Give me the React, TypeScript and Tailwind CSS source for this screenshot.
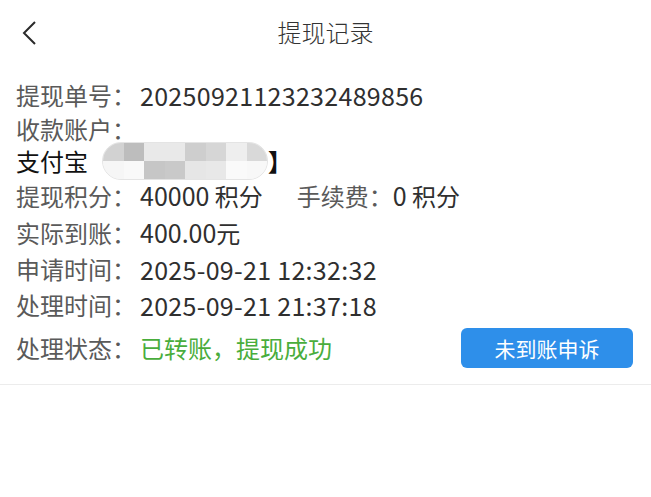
import { ReactNode } from 'react';

const font = { fontFamily: '"Noto Sans CJK SC", "Noto Sans", sans-serif' };

function Row({ label, children, className = '' }: { label: string; children: ReactNode; className?: string }) {
  return (
    <div className={`flex items-center ${className}`}>
      <span className="w-[124px] shrink-0 text-[#5a5a5a]">{label}</span>
      <span className="text-[#2f2f2f]">{children}</span>
    </div>
  );
}

// pixelated blur over the account name
const top = ['#d2d2d2', '#bdbdbd', '#e9e9e9', '#e9e9e9', '#cecece', '#d6d6d6', '#eeeeee', '#d9d9d9'];
const bottom = ['#f6f6f6', '#f9f9f9', '#c6c6c6', '#c9c9c9', '#e6e6e6', '#e8e8e8', '#fafafa', '#f8f8f8'];

function Mosaic() {
  return (
    <div className="ml-[14px] flex h-[38px] w-[166px] flex-col overflow-hidden rounded-full border border-[#e4e4e4] bg-[#f6f6f6]">
      <div className="flex h-1/2">
        {top.map((c, i) => (
          <div key={i} className="h-full flex-1" style={{ background: c }} />
        ))}
      </div>
      <div className="flex h-1/2">
        {bottom.map((c, i) => (
          <div key={i} className="h-full flex-1" style={{ background: c }} />
        ))}
      </div>
    </div>
  );
}

export default function App() {
  return (
    <main className="min-h-[497px] w-[651px] bg-white text-[24px] leading-none" style={font}>
      <header className="relative flex h-[64px] items-center justify-center">
        <svg className="absolute left-[20px] top-[20px]" width="20" height="26" viewBox="0 0 20 26">
          <path d="M15 2 L4 13 L15 24" fill="none" stroke="#2a2a2a" strokeWidth="2" />
        </svg>
        <h1 className="text-[24px] font-light text-[#333]">提现记录</h1>
      </header>

      <section className="border-b border-[#ececec] px-4 pb-[16px] pt-[13px]">
        <Row label="提现单号：" className="h-[36px]">
          <span className="text-[25px] tracking-[0.3px]">20250921123232489856</span>
        </Row>
        <div className="flex h-[32px] items-center text-[#5a5a5a]">收款账户：</div>
        <div className="flex h-[32px] items-center">
          <span className="text-[#111]">支付宝</span>
          <Mosaic />
          <span className="font-bold text-[#111]">】</span>
        </div>
        <Row label="提现积分：" className="h-[37px]">
          <span className="text-[25px]">40000</span> 积分
          <span className="ml-[34px] text-[#5a5a5a]">手续费：</span>
          <span className="text-[25px]">0</span> 积分
        </Row>
        <Row label="实际到账：" className="h-[37px]">
          <span className="text-[25px]">400.00</span>元
        </Row>
        <Row label="申请时间：" className="h-[36px]">
          <span className="text-[25px] tracking-[0.3px]">2025-09-21 12:32:32</span>
        </Row>
        <Row label="处理时间：" className="h-[36px]">
          <span className="text-[25px] tracking-[0.3px]">2025-09-21 21:37:18</span>
        </Row>
        <div className="mt-[5px] flex h-[40px] items-center">
          <span className="w-[124px] shrink-0 text-[#5a5a5a]">处理状态：</span>
          <span className="text-[#49ad3c]">已转账，提现成功</span>
          <button className="ml-auto mr-[2px] h-[40px] w-[172px] rounded-[6px] bg-[#2e8fea] text-[21px] text-white">
            未到账申诉
          </button>
        </div>
      </section>
    </main>
  );
}
